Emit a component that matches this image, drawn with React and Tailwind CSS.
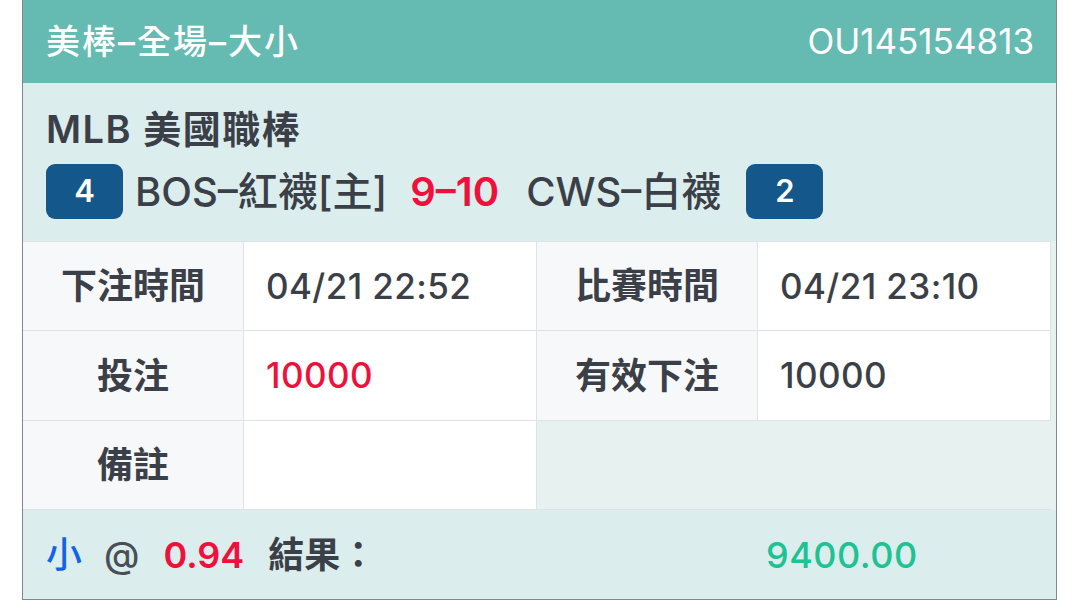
const font = { fontFamily: 'Inter, "Noto Sans CJK TC", sans-serif' }

function Badge({ children }) {
  return (
    <span className="flex h-[55px] w-[77px] items-center justify-center rounded-[9px] bg-[#14578a] text-[31px] font-semibold text-white">
      {children}
    </span>
  )
}

function Label({ children }) {
  return (
    <div className="flex items-center justify-center border-r border-b border-[#dfe2e7] bg-[#f7f8fa] text-[36px] font-bold text-[#3b4048]">
      {children}
    </div>
  )
}

function Value({ children, className = '' }) {
  return (
    <div
      className={`flex items-center border-r border-b border-[#dfe2e7] bg-white pl-[22px] text-[35px] font-medium tracking-[0.4px] text-[#3b4048] ${className}`}
    >
      {children}
    </div>
  )
}

export default function App() {
  return (
    <div className="min-h-[610px] bg-white" style={font}>
      <div className="ml-[22px] w-[1035px] border-x border-b border-[#81878e] bg-[#e6f1f0]">
        <div className="flex h-[83px] items-center justify-between bg-[#65bab1] pl-[23px] pr-[22px] text-white">
          <span className="text-[34px] font-medium tracking-[2px]">美棒–全場–大小</span>
          <span className="text-[35px] font-normal">OU145154813</span>
        </div>

        <div className="flex flex-col gap-[11px] bg-[#dbeeed] pb-[22px] pl-[23px] pt-[22px] text-[#3b4048]">
          <div className="flex h-[48px] items-center text-[38px] font-semibold tracking-[1.5px]">MLB 美國職棒</div>
          <div className="flex h-[55px] items-center text-[40px] font-medium">
            <Badge>4</Badge>
            <span className="ml-[12px]">BOS–紅襪[主]</span>
            <span className="ml-[23px] font-semibold text-[#f0103c]">9–10</span>
            <span className="ml-[27px]">CWS–白襪</span>
            <span className="ml-[25px]">
              <Badge>2</Badge>
            </span>
          </div>
        </div>

        <div className="grid w-[1028px] grid-cols-[221px_293px_221px_293px] grid-rows-[89px_90px_89px] border-t border-[#dfe2e7]">
          <Label>下注時間</Label>
          <Value>04/21 22:52</Value>
          <Label>比賽時間</Label>
          <Value>04/21 23:10</Value>
          <Label>投注</Label>
          <Value className="text-[#f0103c]">10000</Value>
          <Label>有效下注</Label>
          <Value>10000</Value>
          <Label>備註</Label>
          <Value />
          <div className="col-span-2 border-b border-[#dfe2e7]" />
        </div>

        <div className="grid h-[89px] grid-cols-[720px_1fr] items-center bg-[#dbeeed] pl-[23px] text-[36px]">
          <div className="flex items-center">
            <span className="font-medium text-[#1463e6]">小</span>
            <span className="ml-[22px] font-medium text-[#4a4f56]">@</span>
            <span className="ml-[24px] font-semibold text-[#f0103c]">0.94</span>
            <span className="ml-[24px] font-bold text-[#3b4048]">結果：</span>
          </div>
          <span className="font-medium tracking-[0.5px] text-[#1ec293]">9400.00</span>
        </div>
      </div>
    </div>
  )
}
